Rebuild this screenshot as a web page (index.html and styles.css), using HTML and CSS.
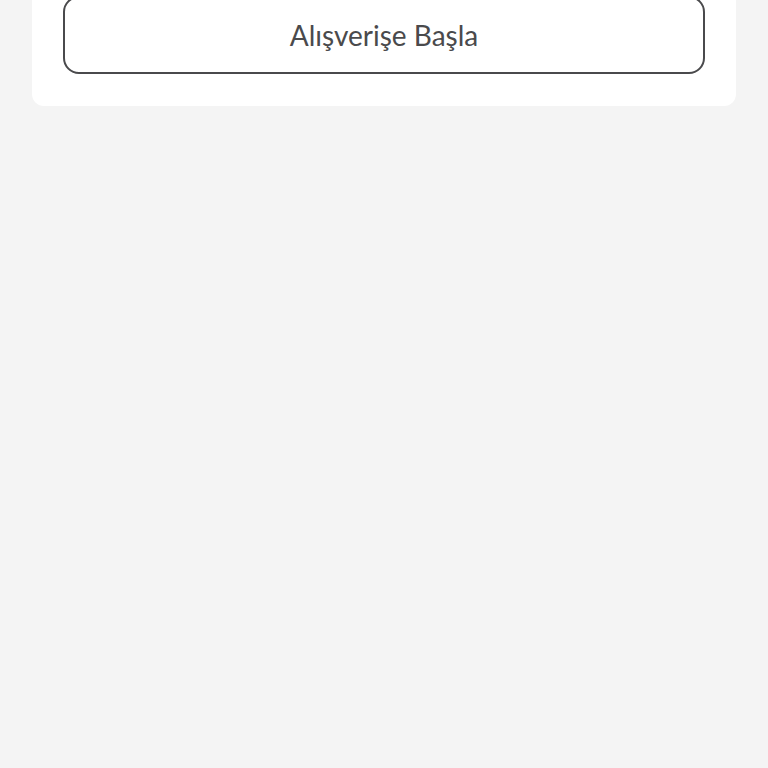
FILE: index.html
```
<!DOCTYPE html>
<html lang="tr">
<head>
  <meta charset="UTF-8" />
  <meta name="viewport" content="width=device-width, initial-scale=1" />
  <title>Alışverişe Başla</title>
  <link rel="stylesheet" href="styles.css">
</head>
<body>
  <main class="card">
    <button type="button" class="start-btn">Alışverişe Başla</button>
  </main>
</body>
</html>
```

FILE: styles.css
```
body {
  margin: 0;
  padding: 0 32px;
  background-color: #f4f4f4;
  font-family: Lato, 'Noto Sans', sans-serif;
}
/* top edge of the card starts above the fold */
.card {
  margin-top: -36px;
  padding: 32px 31px;
  background-color: #fff;
  border-radius: 12px;
}
.start-btn {
  display: block;
  box-sizing: border-box;
  width: 100%;
  padding: 20px;
  border: 2px solid #4a4a4c;
  border-radius: 16px;
  background-color: #fff;
  color: #4a4a4c;
  font-family: inherit;
  font-size: 28px;
  line-height: 34px;
  cursor: pointer;
}
```
